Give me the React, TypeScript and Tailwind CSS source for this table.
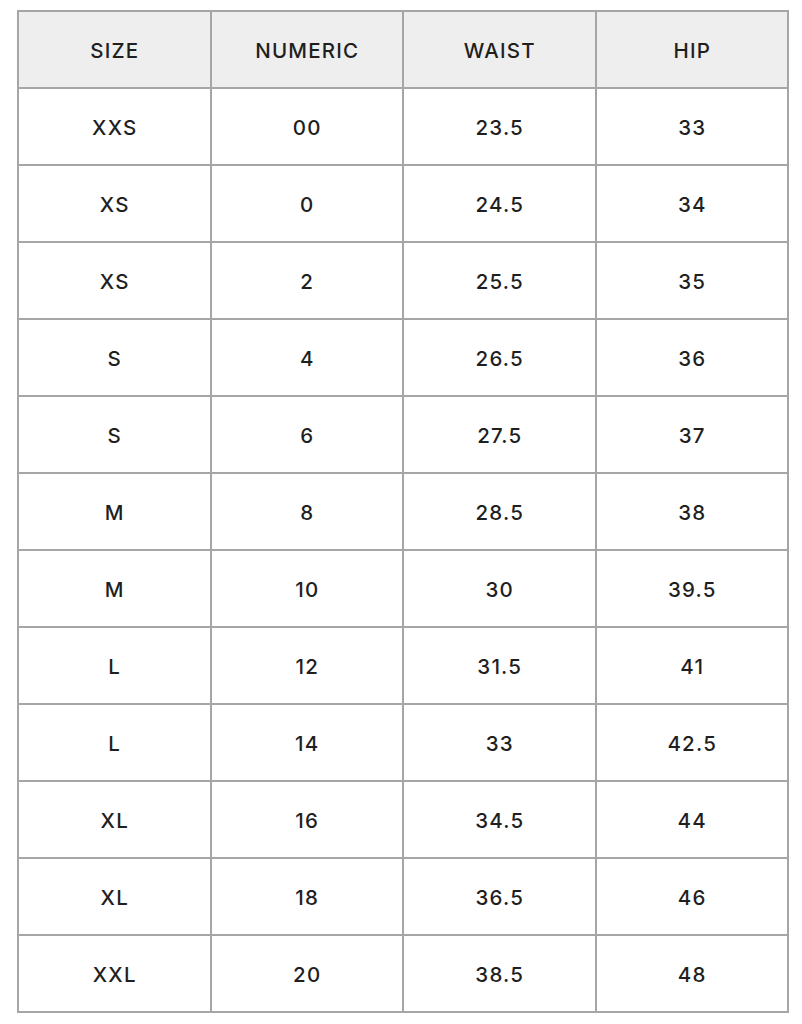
const rows: [string, string, string, string][] = [
  ['XXS', '00', '23.5', '33'],
  ['XS', '0', '24.5', '34'],
  ['XS', '2', '25.5', '35'],
  ['S', '4', '26.5', '36'],
  ['S', '6', '27.5', '37'],
  ['M', '8', '28.5', '38'],
  ['M', '10', '30', '39.5'],
  ['L', '12', '31.5', '41'],
  ['L', '14', '33', '42.5'],
  ['XL', '16', '34.5', '44'],
  ['XL', '18', '36.5', '46'],
  ['XXL', '20', '38.5', '48'],
];

const headers = ['SIZE', 'NUMERIC', 'WAIST', 'HIP'];

export default function App() {
  return (
    <div className="bg-white w-[802px] h-[1024px] pt-[10px] pl-[17px] font-['Inter',sans-serif] text-[#1f1f1f]">
      <table className="w-[772px] border-collapse table-fixed text-[20.5px] tracking-[1.2px] font-medium">
        <thead>
          <tr className="h-[77px] bg-[#eeeeee]">
            {headers.map((h) => (
              <th key={h} className="border-2 border-[#a6a6a6] font-medium text-center pl-[1px] pt-[3px]">
                {h}
              </th>
            ))}
          </tr>
        </thead>
        <tbody>
          {rows.map((r, i) => (
            <tr key={i} className="h-[77px]">
              {r.map((c, j) => (
                <td key={j} className="border-2 border-[#a6a6a6] text-center pl-[1px] pt-[3px]">
                  {c}
                </td>
              ))}
            </tr>
          ))}
        </tbody>
      </table>
    </div>
  );
}
